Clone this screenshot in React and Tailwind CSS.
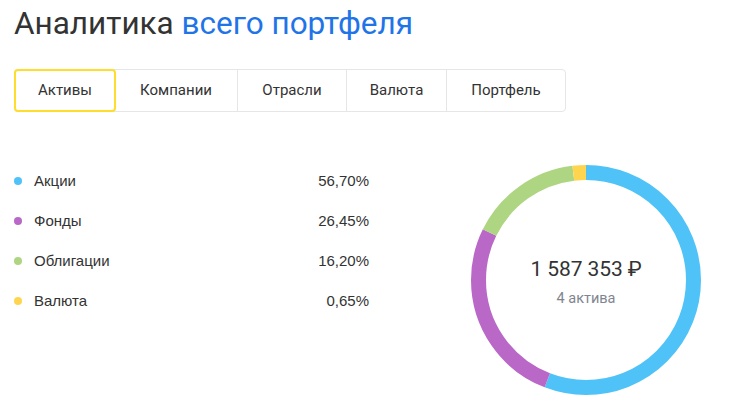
import React from 'react'

const TABS = [
  { name: 'Активы', w: 'w-[102px]' },
  { name: 'Компании', w: 'w-[122px]' },
  { name: 'Отрасли', w: 'w-[109px]' },
  { name: 'Валюта', w: 'w-[100px]' },
  { name: 'Портфель', w: 'w-[119px]' },
]

const ITEMS = [
  { name: 'Акции', value: '56,70%', color: 'bg-[#4fc3f7]' },
  { name: 'Фонды', value: '26,45%', color: 'bg-[#ba68c8]' },
  { name: 'Облигации', value: '16,20%', color: 'bg-[#aed581]' },
  { name: 'Валюта', value: '0,65%', color: 'bg-[#ffd54f]' },
]

// доли на диаграмме (валюта показана с минимальной шириной)
const ARCS = [
  { from: 0, to: 0.558, color: '#4fc3f7' },
  { from: 0.558, to: 0.822, color: '#ba68c8' },
  { from: 0.822, to: 0.98, color: '#aed581' },
  { from: 0.98, to: 1, color: '#ffd54f' },
]

function Donut() {
  const r = 107.5
  const c = 2 * Math.PI * r
  return (
    <div className="relative w-[230px] h-[230px]">
      <svg width="230" height="230" viewBox="0 0 230 230" className="-rotate-90">
        {ARCS.map((a, i) => (
          <circle
            key={i}
            cx="115"
            cy="115"
            r={r}
            fill="none"
            stroke={a.color}
            strokeWidth="15"
            strokeDasharray={`${(a.to - a.from) * c} ${c}`}
            strokeDashoffset={-a.from * c}
          />
        ))}
      </svg>
      <div className="absolute inset-0 flex flex-col items-center justify-center pt-[7px]">
        <div className="text-[21px] leading-6 text-[#333] tracking-[-0.1px]">1 587 353 ₽</div>
        <div className="text-[14.5px] text-[#7f8590] mt-[7px]">4 актива</div>
      </div>
    </div>
  )
}

export default function App() {
  return (
    <div className="w-[739px] h-[417px] bg-white overflow-hidden font-['Roboto',sans-serif] text-[#333]">
      <h1 className="pl-[14px] pt-[3px] text-[31.5px] leading-[42px] font-normal">
        Аналитика <span className="text-[#1f74e8]">всего портфеля</span>
      </h1>

      <div className="ml-[14px] mt-[24px] flex w-[552px] h-[43px] border border-[#e6e6e6] rounded-[4px]">
        {TABS.map((t, i) => (
          <div
            key={t.name}
            className={`flex items-center justify-center shrink-0 text-[15px] text-[#333] ${t.w} ${
              i === 0
                ? 'border-2 border-[#ffdd2d] rounded-[4px] -m-px h-[43px]'
                : i === 1
                ? ''
                : 'border-l border-[#e6e6e6]'
            }`}
          >
            {t.name}
          </div>
        ))}
      </div>

      <div className="flex mt-[49px]">
        <div className="w-[369px] pl-[14px] font-['Liberation_Sans',Arial,sans-serif] text-[15px] text-[#333]">
          {ITEMS.map((it) => (
            <div key={it.name} className="h-10 flex items-center">
              <span className={`w-2 h-2 rounded-full ${it.color}`} />
              <span className="ml-3 flex-1">{it.name}</span>
              <span>{it.value}</span>
            </div>
          ))}
        </div>
        <div className="ml-[102px] mt-[4px]">
          <Donut />
        </div>
      </div>
    </div>
  )
}
